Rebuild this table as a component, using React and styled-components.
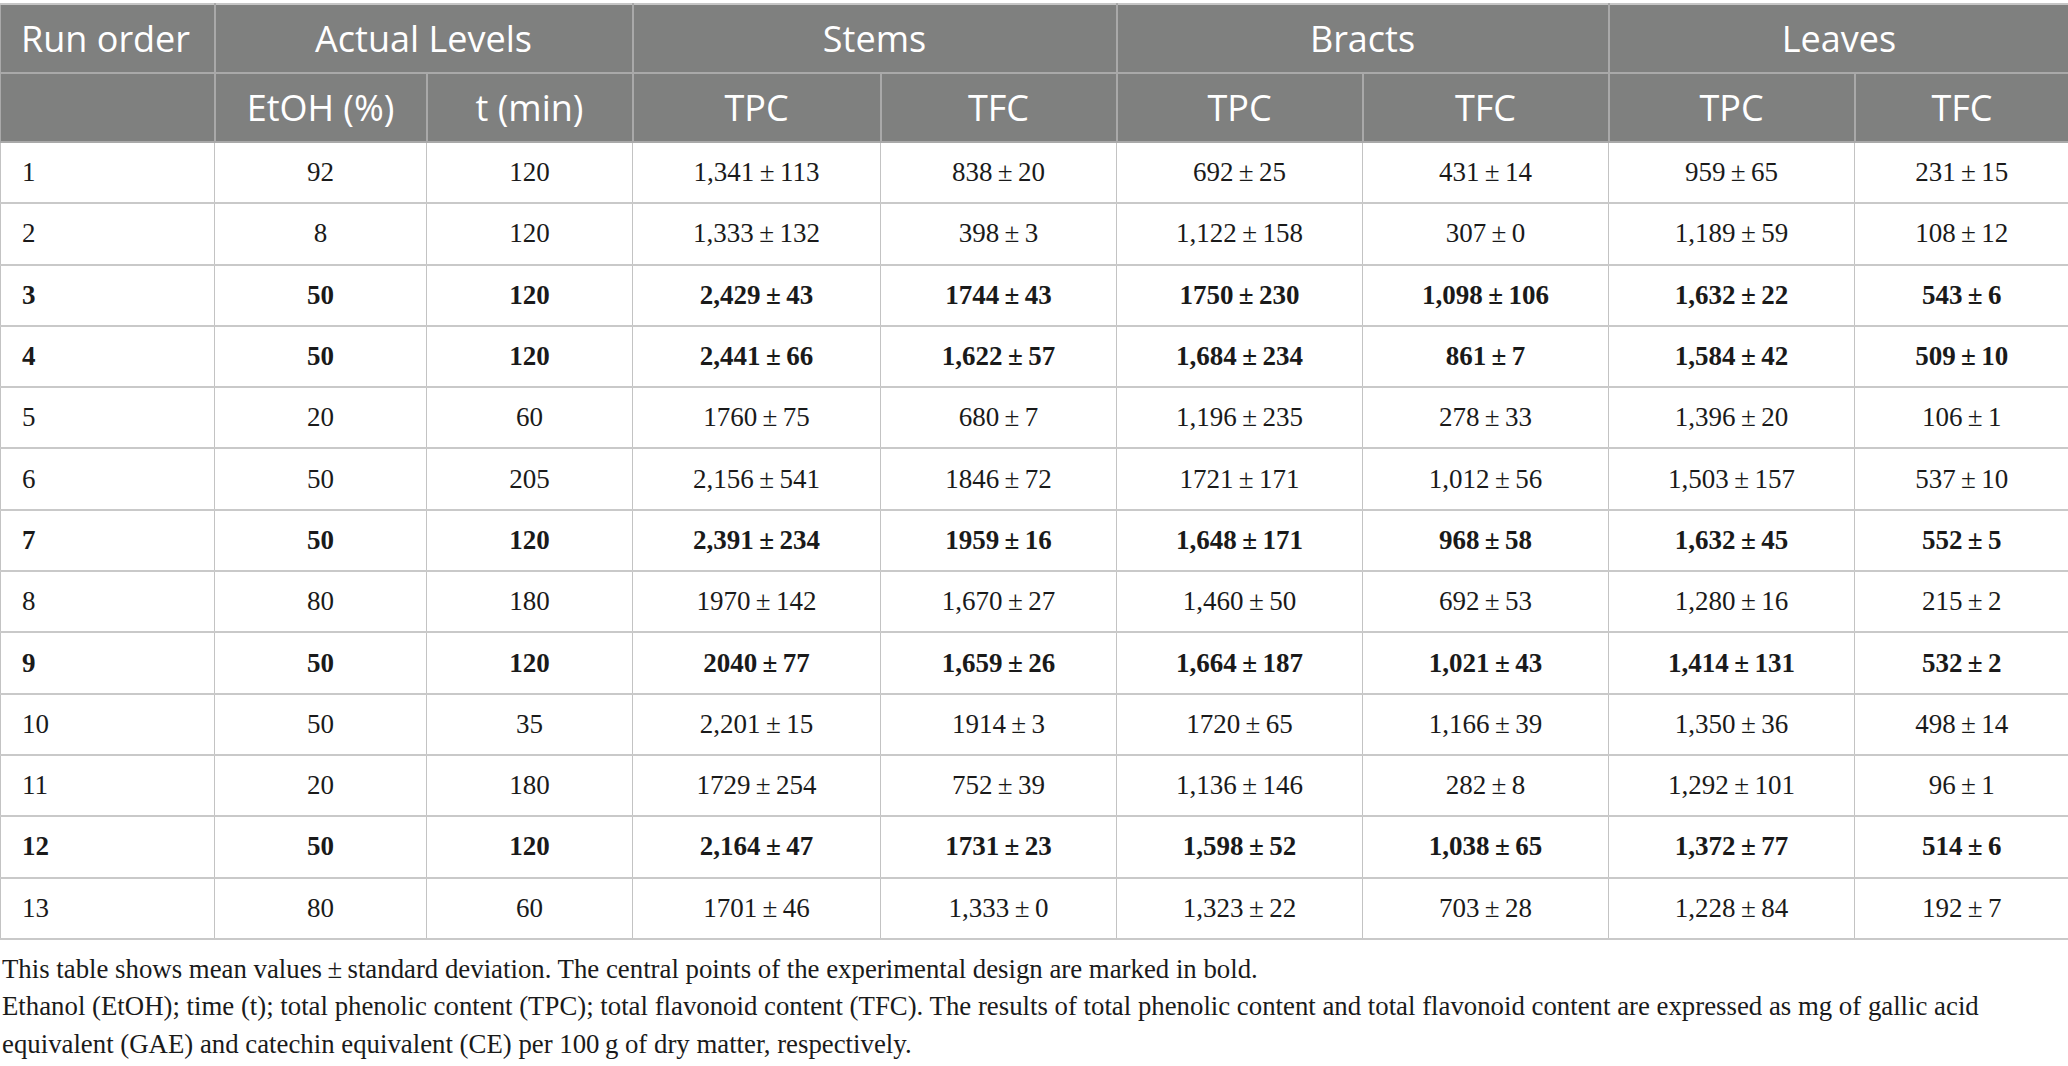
import React from "react";
import styled, { createGlobalStyle } from "styled-components";

const GlobalStyle = createGlobalStyle`
  html, body {
    margin: 0;
    padding: 0;
    background: #ffffff;
  }
  body {
    font-family: "Liberation Serif", "Times New Roman", serif;
    color: #111111;
  }
`;

const Page = styled.div`
  width: 2068px;
  padding-top: 3px;
  box-sizing: border-box;
`;

const Table = styled.table`
  width: 2068px;
  border-collapse: collapse;
  table-layout: fixed;
  border-top: 2px solid #c6c6c6;
`;

const HeadCell = styled.th`
  background: #7f807f;
  color: #ffffff;
  font-family: "Open Sans", "Noto Sans", sans-serif;
  font-weight: 400;
  font-size: 36px;
  height: 67px;
  padding: 0 ${(p) => (p.$align === "left" ? "20px" : "8px")};
  text-align: ${(p) => p.$align || "center"};
  border: 2px solid #a9a9a9;
  border-top: none;
  white-space: nowrap;
  &:first-child { border-left: 1px solid #a9a9a9; }
  &:last-child { border-right: none; }
`;

const Row = styled.tr`
  height: 61.3px;
`;

const Cell = styled.td`
  font-family: "Liberation Serif", "Times New Roman", serif;
  font-size: 27px;
  font-weight: ${(p) => (p.$bold ? 700 : 400)};
  color: #1a1a1a;
  text-align: ${(p) => p.$align || "center"};
  padding: 0 ${(p) => (p.$align === "left" ? "21px" : "6px")};
  border-left: 1px solid #c3c3c3;
  border-right: 1px solid #c3c3c3;
  border-bottom: 2px solid #c9c9c9;
  white-space: nowrap;
  &:last-child { border-right: none; }
`;

const Notes = styled.div`
  padding: 11px 2px 0 2px;
  font-family: "Liberation Serif", "Times New Roman", serif;
  font-size: 26.8px;
  line-height: 37.5px;
  color: #1a1a1a;
`;

const NoteLine = styled.p`
  margin: 0;
`;

const widths = [214, 212, 206, 248, 236, 246, 246, 246, 214];

const pm = (a, b) => `${a}\u2009±\u2009${b}`;

const rows = [
  { n: 1, b: false, v: ["92", "120", pm("1,341", 113), pm(838, 20), pm(692, 25), pm(431, 14), pm(959, 65), pm(231, 15)] },
  { n: 2, b: false, v: ["8", "120", pm("1,333", 132), pm(398, 3), pm("1,122", 158), pm(307, 0), pm("1,189", 59), pm(108, 12)] },
  { n: 3, b: true, v: ["50", "120", pm("2,429", 43), pm(1744, 43), pm(1750, 230), pm("1,098", 106), pm("1,632", 22), pm(543, 6)] },
  { n: 4, b: true, v: ["50", "120", pm("2,441", 66), pm("1,622", 57), pm("1,684", 234), pm(861, 7), pm("1,584", 42), pm(509, 10)] },
  { n: 5, b: false, v: ["20", "60", pm(1760, 75), pm(680, 7), pm("1,196", 235), pm(278, 33), pm("1,396", 20), pm(106, 1)] },
  { n: 6, b: false, v: ["50", "205", pm("2,156", 541), pm(1846, 72), pm(1721, 171), pm("1,012", 56), pm("1,503", 157), pm(537, 10)] },
  { n: 7, b: true, v: ["50", "120", pm("2,391", 234), pm(1959, 16), pm("1,648", 171), pm(968, 58), pm("1,632", 45), pm(552, 5)] },
  { n: 8, b: false, v: ["80", "180", pm(1970, 142), pm("1,670", 27), pm("1,460", 50), pm(692, 53), pm("1,280", 16), pm(215, 2)] },
  { n: 9, b: true, v: ["50", "120", pm(2040, 77), pm("1,659", 26), pm("1,664", 187), pm("1,021", 43), pm("1,414", 131), pm(532, 2)] },
  { n: 10, b: false, v: ["50", "35", pm("2,201", 15), pm(1914, 3), pm(1720, 65), pm("1,166", 39), pm("1,350", 36), pm(498, 14)] },
  { n: 11, b: false, v: ["20", "180", pm(1729, 254), pm(752, 39), pm("1,136", 146), pm(282, 8), pm("1,292", 101), pm(96, 1)] },
  { n: 12, b: true, v: ["50", "120", pm("2,164", 47), pm(1731, 23), pm("1,598", 52), pm("1,038", 65), pm("1,372", 77), pm(514, 6)] },
  { n: 13, b: false, v: ["80", "60", pm(1701, 46), pm("1,333", 0), pm("1,323", 22), pm(703, 28), pm("1,228", 84), pm(192, 7)] },
];

export default function App() {
  return (
    <>
      <GlobalStyle />
      <Page>
        <Table>
          <colgroup>
            {widths.map((w, i) => (
              <col key={i} style={{ width: `${w}px` }} />
            ))}
          </colgroup>
          <thead>
            <tr>
              <HeadCell $align="left">Run order</HeadCell>
              <HeadCell colSpan={2}>Actual Levels</HeadCell>
              <HeadCell colSpan={2}>Stems</HeadCell>
              <HeadCell colSpan={2}>Bracts</HeadCell>
              <HeadCell colSpan={2}>Leaves</HeadCell>
            </tr>
            <tr>
              <HeadCell $align="left"></HeadCell>
              <HeadCell>EtOH (%)</HeadCell>
              <HeadCell>t (min)</HeadCell>
              <HeadCell>TPC</HeadCell>
              <HeadCell>TFC</HeadCell>
              <HeadCell>TPC</HeadCell>
              <HeadCell>TFC</HeadCell>
              <HeadCell>TPC</HeadCell>
              <HeadCell>TFC</HeadCell>
            </tr>
          </thead>
          <tbody>
            {rows.map((r) => (
              <Row key={r.n}>
                <Cell $align="left" $bold={r.b}>{r.n}</Cell>
                {r.v.map((val, i) => (
                  <Cell key={i} $bold={r.b}>{val}</Cell>
                ))}
              </Row>
            ))}
          </tbody>
        </Table>
        <Notes>
          <NoteLine>
            This table shows mean values{"\u2009"}±{"\u2009"}standard deviation. The central points of the experimental design are marked in bold.
          </NoteLine>
          <NoteLine>
            Ethanol (EtOH); time (t); total phenolic content (TPC); total flavonoid content (TFC). The results of total phenolic content and total flavonoid content are expressed as mg of gallic acid equivalent (GAE) and catechin equivalent (CE) per 100{"\u2009"}g of dry matter, respectively.
          </NoteLine>
        </Notes>
      </Page>
    </>
  );
}
